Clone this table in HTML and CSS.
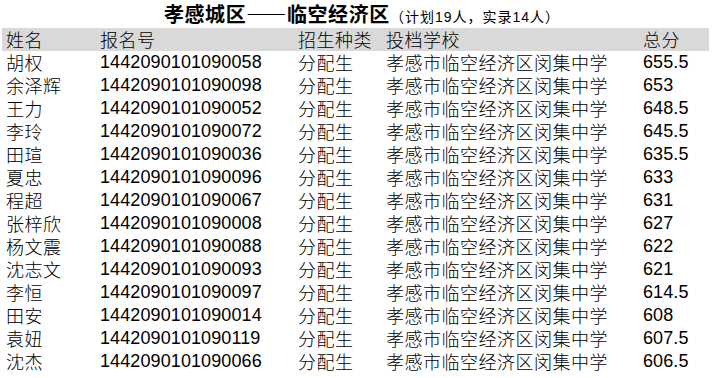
FILE: index.html
```html
<!DOCTYPE html>
<html lang="zh">
<head>
<meta charset="utf-8">
<link rel="stylesheet" href="styles.css">
</head>
<body>
<div class="sheet">
  <div class="title"><span class="main">孝感城区——临空经济区</span><span class="sub">（计划19人，实录14人）</span></div>
  <div class="row head"><span>姓名</span><span>报名号</span><span>招生种类</span><span>投档学校</span><span>总分</span></div>
  <div class="row"><span>胡权</span><span class="num">1442090101090058</span><span>分配生</span><span>孝感市临空经济区闵集中学</span><span class="num">655.5</span></div>
  <div class="row"><span>余泽辉</span><span class="num">1442090101090098</span><span>分配生</span><span>孝感市临空经济区闵集中学</span><span class="num">653</span></div>
  <div class="row"><span>王力</span><span class="num">1442090101090052</span><span>分配生</span><span>孝感市临空经济区闵集中学</span><span class="num">648.5</span></div>
  <div class="row"><span>李玲</span><span class="num">1442090101090072</span><span>分配生</span><span>孝感市临空经济区闵集中学</span><span class="num">645.5</span></div>
  <div class="row"><span>田瑄</span><span class="num">1442090101090036</span><span>分配生</span><span>孝感市临空经济区闵集中学</span><span class="num">635.5</span></div>
  <div class="row"><span>夏忠</span><span class="num">1442090101090096</span><span>分配生</span><span>孝感市临空经济区闵集中学</span><span class="num">633</span></div>
  <div class="row"><span>程超</span><span class="num">1442090101090067</span><span>分配生</span><span>孝感市临空经济区闵集中学</span><span class="num">631</span></div>
  <div class="row"><span>张梓欣</span><span class="num">1442090101090008</span><span>分配生</span><span>孝感市临空经济区闵集中学</span><span class="num">627</span></div>
  <div class="row"><span>杨文震</span><span class="num">1442090101090088</span><span>分配生</span><span>孝感市临空经济区闵集中学</span><span class="num">622</span></div>
  <div class="row"><span>沈志文</span><span class="num">1442090101090093</span><span>分配生</span><span>孝感市临空经济区闵集中学</span><span class="num">621</span></div>
  <div class="row"><span>李恒</span><span class="num">1442090101090097</span><span>分配生</span><span>孝感市临空经济区闵集中学</span><span class="num">614.5</span></div>
  <div class="row"><span>田安</span><span class="num">1442090101090014</span><span>分配生</span><span>孝感市临空经济区闵集中学</span><span class="num">608</span></div>
  <div class="row"><span>袁妞</span><span class="num">1442090101090119</span><span>分配生</span><span>孝感市临空经济区闵集中学</span><span class="num">607.5</span></div>
  <div class="row"><span>沈杰</span><span class="num">1442090101090066</span><span>分配生</span><span>孝感市临空经济区闵集中学</span><span class="num">606.5</span></div>
</div>
</body>
</html>
```
FILE: styles.css
```css
html, body {
  margin: 0;
  padding: 0;
  background: #ffffff;
}
body {
  font-family: "Liberation Sans", "Noto Sans CJK SC", sans-serif;
  color: #000000;
  width: 712px;
  height: 378px;
  overflow: hidden;
}
.sheet {
  padding: 0 3px 0 2px;
}
.title {
  height: 28px;
  display: flex;
  justify-content: center;
  align-items: baseline;
  padding-left: 13px;
  line-height: 28px;
}
.title .main {
  font-size: 20px;
  font-weight: bold;
  letter-spacing: 0.6px;
  font-family: "Noto Sans CJK SC", sans-serif;
}
.title .sub {
  font-size: 14px;
  letter-spacing: 1px;
  font-family: "Liberation Sans", "Noto Sans CJK SC", sans-serif;
}
.row {
  display: grid;
  grid-template-columns: 94px 198px 88px 257px 1fr;
  height: 23px;
  line-height: 23px;
  font-size: 18px;
  padding-left: 4px;
  white-space: nowrap;
}
.row span {
  font-family: "Noto Sans CJK SC", sans-serif;
  font-weight: 300;
  letter-spacing: 0.5px;
}
.row span.num {
  font-family: "Liberation Sans", sans-serif;
  font-weight: normal;
  letter-spacing: 0.1px;
}
.head {
  background: #d9d9d9;
}
```
